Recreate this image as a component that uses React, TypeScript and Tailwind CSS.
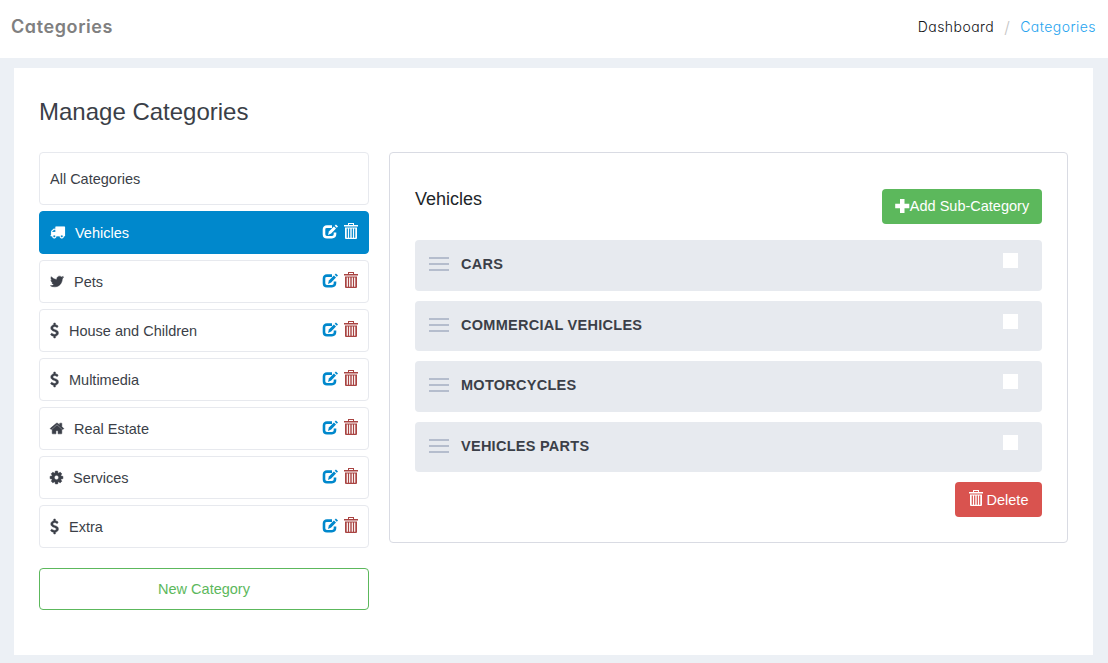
import React from "react";

const paths = {
  truck:
    "M640 1408q0-52-38-90t-90-38-90 38-38 90 38 90 90 38 90-38 38-90zm-384-512h384v-256h-158q-13 0-22 9l-195 195q-9 9-9 22v30zm1280 512q0-52-38-90t-90-38-90 38-38 90 38 90 90 38 90-38 38-90zm256-1088v1024q0 15-4 26.500t-13.500 18.500-16.500 11.500-23.500 6-22.500 2-25.500 0-22.500-.5q0 106-75 181t-181 75-181-75-75-181h-384q0 106-75 181t-181 75-181-75-75-181h-64q-3 0-22.500.5t-25.500 0-22.500-2-23.500-6-16.500-11.500-13.500-18.500-4-26.500q0-26 19-45t45-19v-320q0-8-.5-35t0-38 2.500-34.500 6.500-37 14-30.500 22.500-30l198-198q19-19 50.500-32t58.500-13h160v-192q0-26 19-45t45-19h1024q26 0 45 19t19 45z",
  bird:
    "M1684 408q-67 98-162 167 1 14 1 42 0 130-38 259.500t-115.500 248.500-184.500 210.500-258 146-323 54.500q-271 0-496-145 35 4 78 4 225 0 401-138-105-2-188-64.500t-114-159.500q33 5 61 5 43 0 85-11-112-23-185.500-111.500t-73.500-205.500v-4q68 38 146 41-66-44-105-115t-39-154q0-88 44-163 121 149 294.500 238.500t371.500 99.500q-8-38-8-74 0-134 94.500-228.500t228.500-94.500q140 0 236 102 109-21 205-78-37 115-142 178 93-10 186-50z",
  home:
    "M1472 992v480q0 26-19 45t-45 19h-384v-384h-256v384h-384q-26 0-45-19t-19-45v-480q0-1 .5-3t.5-3l575-474 575 474q1 2 1 6zm223-69l-62 74q-8 9-21 11h-3q-13 0-21-7l-692-577-692 577q-12 8-24 7-13-2-21-11l-62-74q-8-10-7-23.500t11-21.500l719-599q32-26 76-26t76 26l244 204v-195q0-14 9-23t23-9h192q14 0 23 9t9 23v408l219 182q10 8 11 21.500t-7 23.500z",
  cog:
    "M1152 896q0-106-75-181t-181-75-181 75-75 181 75 181 181 75 181-75 75-181zm512-109v222q0 12-8 23t-20 13l-185 28q-19 54-39 91 35 50 107 138 10 12 10 25t-9 23q-27 37-99 108t-94 71q-12 0-26-9l-138-108q-44 23-91 38-16 136-29 186-7 28-36 28h-222q-14 0-24.500-8.500t-11.500-21.500l-28-184q-49-16-90-37l-141 107q-10 9-25 9-14 0-25-11-126-114-165-168-7-10-7-23 0-12 8-23 15-21 51-66.500t54-70.500q-27-50-41-99l-183-27q-13-2-21-12.500t-8-23.500v-222q0-12 8-23t19-13l186-28q14-46 39-92-40-57-107-138-10-12-10-24 0-10 9-23 26-36 98.500-107.500t94.500-71.500q13 0 26 10l138 107q44-23 91-38 16-136 29-186 7-28 36-28h222q14 0 24.500 8.500t11.500 21.500l28 184q49 16 90 37l142-107q9-9 24-9 13 0 25 10 129 119 165 170 7 8 7 22 0 12-8 23-15 21-51 66.500t-54 70.500q26 50 41 98l183 28q13 2 21 12.500t8 23.500z",
  dollar:
    "M1362 1185q0 153-99.500 263.500t-258.500 136.500v175q0 14-9 23t-23 9h-135q-13 0-22.500-9.500t-9.500-22.500v-175q-66-9-127.500-31t-101.500-44.500-74-48-46.500-37.500-17.500-18q-17-21-2-41l103-135q7-10 23-12 15-2 24 9l2 2q113 99 243 125 37 8 74 8 81 0 142.500-43t61.500-122q0-28-15-53t-33.500-42-58.500-37.500-66-32-80-32.500q-39-16-61.500-25t-61.500-26.500-62.500-31-56.500-35.500-53.500-42.500-43.500-49-35.500-58-21-66.500-8.500-78q0-138 98-242t255-134v-180q0-13 9.500-22.500t22.500-9.500h135q14 0 23 9t9 23v176q57 6 110.500 23t87 33.500 63.500 37.500 39 29 15 14q17 18 5 38l-81 146q-8 15-23 16-14 3-27-7-3-3-14.500-12t-39-26.500-58.500-32-74.500-26-85.500-11.500q-95 0-155 43t-60 111q0 26 8.500 48t29.500 41.500 39.500 33 56 31 60.500 27 70 27.500q53 20 81 31.500t76 35 75.500 42.500 62 50 53 63.500 31.500 76.500 13 94z",
};

type IconName = keyof typeof paths;

// view box and drawn size of each category icon
const boxes: Record<IconName, { box: string; size: string }> = {
  truck: { box: "0 64 1792 1792", size: "w-[15px] h-[15px] mr-[10px]" },
  bird: { box: "64 0 1664 1792", size: "w-[14px] h-[15px] mr-[10px]" },
  home: { box: "64 0 1664 1792", size: "w-[14px] h-[15px] mr-[10px]" },
  cog: { box: "128 0 1536 1792", size: "w-[13px] h-[15px] mr-[10px]" },
  dollar: { box: "384 0 1024 1792", size: "w-[9px] h-[15px] mr-[10px]" },
};

function CategoryIcon({ name }: { name: IconName }) {
  return (
    <svg
      viewBox={boxes[name].box}
      className={boxes[name].size}
      fill="currentColor"
      stroke="currentColor"
      strokeWidth={name === "truck" ? 20 : 60}
      overflow="visible"
    >
      <path d={paths[name]} />
    </svg>
  );
}

function EditIcon() {
  return (
    <svg viewBox="0 0 16 15" className="h-[15px] w-4" fill="none">
      <path
        d="M10 2.600H5Q2 2.600 2 5.600V10.200Q2 13.200 5 13.200H10Q13 13.200 13 10.200V8.500"
        stroke="currentColor"
        strokeWidth="2.600"
      />
      <path d="M6 11L6.900 7.500L11.900 2.500L14 4.600L9.200 9.600Z" fill="currentColor" />
      <path d="M12.700 1.700L13.900.5L16 2.600L14.800 3.800Z" fill="currentColor" />
    </svg>
  );
}

function TrashIcon() {
  return (
    <svg viewBox="0 0 14 16" className="h-4 w-[14px]" fill="currentColor">
      <path d="M4 0H10V2H14V3.500H0V2H4ZM5 1V2H9V1Z" fillRule="evenodd" />
      <path
        d="M1 4.500H13V15Q13 16 12 16H2Q1 16 1 15ZM2.700 5.500V14.700H3.900V5.500ZM5.100 5.500V14.700H6.300V5.500ZM7.700 5.500V14.700H8.900V5.500ZM10.100 5.500V14.700H11.300V5.500Z"
        fillRule="evenodd"
      />
    </svg>
  );
}

const categories: { name: string; icon: IconName; active?: boolean }[] = [
  { name: "Vehicles", icon: "truck", active: true },
  { name: "Pets", icon: "bird" },
  { name: "House and Children", icon: "dollar" },
  { name: "Multimedia", icon: "dollar" },
  { name: "Real Estate", icon: "home" },
  { name: "Services", icon: "cog" },
  { name: "Extra", icon: "dollar" },
];

const subCategories = ["CARS", "COMMERCIAL VEHICLES", "MOTORCYCLES", "VEHICLES PARTS"];

export default function App() {
  return (
    <div className="h-[663px] w-[1108px] overflow-hidden bg-[#ecf0f5] font-['Liberation_Sans',Arial,sans-serif] text-[14.500px] leading-5 text-[#3b3f48]">
      <header className="flex h-[58px] items-center justify-between bg-white pr-3 pb-[5px] pl-[11px] font-['Inter',sans-serif] [font-feature-settings:'cv11']">
        <h1 className="text-[18px] font-semibold tracking-[0.600px] text-[#808080]">Categories</h1>
        <nav className="flex items-center text-[14px] font-light tracking-[0.450px]">
          <a className="text-[#101215]">Dashboard</a>
          <span className="px-[10px] text-[16px] text-[#c4c4c4]">/</span>
          <a className="text-[#26a4ef]">Categories</a>
        </nav>
      </header>

      <main className="mt-[10px] ml-[14px] h-[587px] w-[1079px] bg-white px-[25px] pt-[28px]">
        <h2 className="text-[24px] leading-8">Manage Categories</h2>
        <div className="mt-6 flex items-start gap-5">
          <aside className="flex w-[330px] flex-col gap-[6px]">
            <div className="flex h-[53px] items-center rounded border border-[#e7e9ee] px-[10px]">All Categories</div>
            {categories.map((c) => (
              <div
                key={c.name}
                className={
                  c.active
                    ? "flex h-[43px] items-center rounded border border-[#0088cc] bg-[#0088cc] px-[10px] text-white"
                    : "flex h-[43px] items-center rounded border border-[#e7e9ee] px-[10px]"
                }
              >
                <CategoryIcon name={c.icon} />
                <span className="grow">{c.name}</span>
                <span className={c.active ? "flex items-center gap-[6px] pb-[3px] text-white" : "flex items-center gap-[6px] pb-[3px] text-[#0088cc]"}>
                  <EditIcon />
                  <span className={c.active ? "text-white" : "text-[#a94442]"}>
                    <TrashIcon />
                  </span>
                </span>
              </div>
            ))}
            <button className="mt-[14px] h-[42px] rounded border border-[#5cb85c] text-[#5cb85c]">New Category</button>
          </aside>

          <section className="h-[391px] w-[679px] rounded border border-[#d9dbe3] px-[25px] pt-9">
            <div className="flex items-start justify-between">
              <h3 className="text-[18px] leading-5 text-[#212529]">Vehicles</h3>
              <button className="flex h-[35px] w-40 items-center justify-center rounded bg-[#5cb85c] pb-[2px] text-white">
                <svg viewBox="0 0 15 14" className="h-[14px] w-[15px]" fill="currentColor">
                  <path d="M5 0H9.500V4.700H14.300V9.300H9.500V14H5V9.300H.2V4.700H5Z" />
                </svg>
                Add Sub-Category
              </button>
            </div>
            <ul className="mt-4 flex flex-col gap-[10px]">
              {subCategories.map((s) => (
                <li key={s} className="flex h-[50.500px] items-start rounded bg-[#e7eaef] pr-6 pl-[14px]">
                  <span className="mt-[17px] flex w-5 flex-col gap-1">
                    <span className="h-[2px] bg-[#b5bdcd]" />
                    <span className="h-[2px] bg-[#b5bdcd]" />
                    <span className="h-[2px] bg-[#b5bdcd]" />
                  </span>
                  <span className="mt-[14px] ml-3 grow text-[14.500px] font-bold tracking-[0.270px]">{s}</span>
                  <span className="mt-[13px] h-[15px] w-[15px] bg-white" />
                </li>
              ))}
            </ul>
            <div className="mt-[10px] flex justify-end">
              <button className="flex h-[35px] w-[87px] items-center justify-center gap-1 rounded bg-[#d9534f] text-white">
                <span className="pb-[3px]">
                  <TrashIcon />
                </span>
                Delete
              </button>
            </div>
          </section>
        </div>
      </main>
    </div>
  );
}
